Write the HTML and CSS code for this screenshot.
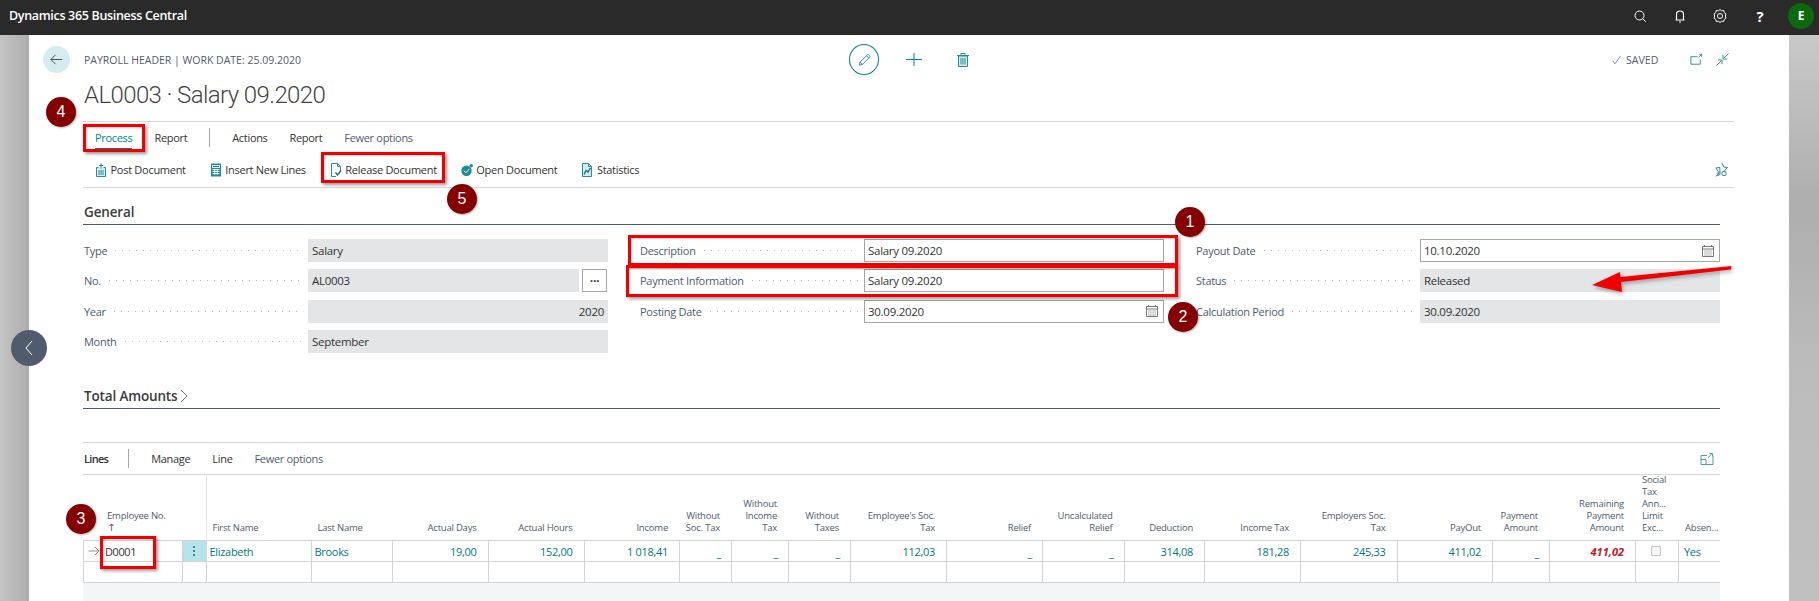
FILE: index.html
```html
<!DOCTYPE html>
<html lang="en">
<head>
<meta charset="utf-8">
<title>AL0003 · Salary 09.2020</title>
<link rel="stylesheet" href="styles.css">
</head>
<body>
<div class="screen">
  <header class="topbar">
    <div class="brand">Dynamics 365 Business Central</div>
    <div class="top-icons">
      <svg class="ti" viewBox="0 0 16 16"><circle cx="7.500" cy="7.500" r="4.500"/><path d="M10.800 10.800l3 3"/></svg>
      <svg class="ti" viewBox="0 0 16 16"><path d="M4.500 12V6.500a3.500 3.500 0 0 1 7 0V12zM3.500 12h9M7 14h2" stroke-width="1.200"/></svg>
      <svg class="ti" viewBox="0 0 16 16"><circle cx="8" cy="8" r="2.500"/><path d="M8 1.500l1.700 1.300 2.100-.2.500 2.100L14 6l-.7 2 .7 2-1.700 1.300-.5 2.100-2.100-.2L8 14.500l-1.700-1.300-2.100.2-.5-2.100L2 10l.7-2L2 6l1.700-1.300.5-2.100 2.100.2z"/></svg>
      <span class="help">?</span>
      <span class="avatar">E</span>
    </div>
  </header>
  <div class="stage">
    <div class="gutter"></div>
    <main class="page">
      <div class="head">
        <button class="back"><svg viewBox="0 0 16 16"><path d="M14 8H2M7 3L2 8l5 5"/></svg></button>
        <div class="crumb">PAYROLL HEADER | WORK DATE: 25.09.2020</div>
        <div class="center-tools">
          <span class="edit"><svg viewBox="0 0 16 16"><path d="M2.500 13.500l.8-3.300L11 2.500a1.200 1.200 0 0 1 1.800 0l.7.700a1.200 1.200 0 0 1 0 1.800L5.800 12.700zM3.300 10.200l2.500 2.500M10 3.500l2.500 2.500"/></svg></span>
          <svg class="tool plus" viewBox="0 0 16 13"><path d="M0 6.500h16M8 0v13"/></svg>
          <svg class="tool trash" viewBox="0 0 12 14"><path class="tint" d="M1.500 3h9v10.500h-9z"/><path d="M1.500 3h9v10.500h-9zM0 2.500h12M4 2.500V.5h4v2M4 5v6.500M6 5v6.500M8 5v6.500"/></svg>
        </div>
        <div class="saved"><svg viewBox="0 0 12 12"><path d="M1 7l2.500 3.500L10.500 1"/></svg>SAVED</div>
        <svg class="win" viewBox="0 0 16 16"><path d="M12 8v5H2V5h7M10 6l3.500-3.500M11 2.500h2.500V5"/></svg>
        <svg class="win last-win" viewBox="0 0 16 16"><path d="M1.500 14.500L7 9M3 8.500H7.500V13M14.500 1.500L9 7M13 7.500H8.500V3"/></svg>
      </div>
      <h1 class="title">AL0003 · Salary 09.2020</h1>

      <div class="ribbon">
        <nav class="tabs">
          <span class="tab current">Process</span>
          <span class="tab">Report</span>
          <i class="bar"></i>
          <span class="tab">Actions</span>
          <span class="tab">Report</span>
          <span class="tab muted">Fewer options</span>
        </nav>
        <div class="actions">
          <span class="act"><svg viewBox="0 0 12 14"><path class="tint" d="M1.500 4.500h9v9h-9z"/><path d="M1.500 4.500h2M8.500 4.500h2M1.500 4.500v9h9v-9M4 7v5M6 7v5M8 7v5M6 .5v5M3.800 2.500h4.400"/></svg>Post Document</span>
          <span class="act"><svg viewBox="0 0 12 14"><path class="fill" d="M1 .5h10v13H1z"/><path class="cut" d="M2.500 2.500h7v2h-7zM2.500 6.500h7M2.500 8.500h7M2.500 10.500h7M4.800 6v6M7.200 6v6"/></svg>Insert New Lines</span>
          <span class="act"><svg viewBox="0 0 12 14"><path d="M6 13.500H1.500V.5h6l3 3v4M7.500.5v3h3"/><path class="strong" d="M5.500 9.500l2 2.500 3.500-4.500"/></svg>Release Document</span>
          <span class="act"><svg viewBox="0 0 12 12"><circle class="fill" cx="5.500" cy="6.800" r="5.200"/><path class="cut" d="M3 6.800l2 2 3.300-3.800"/><circle class="fill" cx="10.200" cy="1.800" r="1.700"/></svg>Open Document</span>
          <span class="act"><svg viewBox="0 0 12 14"><path class="tint" d="M1.500 13.500V.5h6l3 3v10z"/><path d="M1.500 13.500V.5h6l3 3v10zM7.500.5v3h3"/><path class="strong" d="M3 11.500l2-4 2 1.500 2.500-4"/></svg>Statistics</span>
          <svg class="pin" viewBox="0 0 14 15"><path d="M7 1l1.800 4 3.700.5-2.700 2.800.4 2M5 12.500l-2.300 1 .5-4.200L1 6l3.800-.6zM1 14.500l4-5"/><circle cx="9" cy="11.500" r="2.200"/></svg>
        </div>
      </div>

      <section class="section">
        <h2 class="sec-title">General</h2>
        <div class="fields">
          <div class="col">
            <div class="field"><span class="lbl">Type</span><span class="leader"></span><span class="val ro">Salary</span></div>
            <div class="field"><span class="lbl">No.</span><span class="leader"></span><span class="val ro short">AL0003</span><span class="more">···</span></div>
            <div class="field"><span class="lbl">Year</span><span class="leader"></span><span class="val ro end">2020</span></div>
            <div class="field"><span class="lbl">Month</span><span class="leader"></span><span class="val ro">September</span></div>
          </div>
          <div class="col">
            <div class="field"><span class="lbl">Description</span><span class="leader"></span><span class="val edit-v">Salary 09.2020</span></div>
            <div class="field"><span class="lbl">Payment Information</span><span class="leader"></span><span class="val edit-v">Salary 09.2020</span></div>
            <div class="field"><span class="lbl">Posting Date</span><span class="leader"></span><span class="val edit-v date">30.09.2020<svg class="cal" viewBox="0 0 14 14"><path d="M1.500 2.500h11v10h-11zM1.500 5h11M3.500 1v2M10.500 1v2"/><path class="dots" d="M3.500 7h7M3.500 9h7M3.500 11h7"/></svg></span></div>
          </div>
          <div class="col">
            <div class="field"><span class="lbl">Payout Date</span><span class="leader"></span><span class="val edit-v date">10.10.2020<svg class="cal" viewBox="0 0 14 14"><path d="M1.500 2.500h11v10h-11zM1.500 5h11M3.500 1v2M10.500 1v2"/><path class="dots" d="M3.500 7h7M3.500 9h7M3.500 11h7"/></svg></span></div>
            <div class="field"><span class="lbl">Status</span><span class="leader"></span><span class="val ro">Released</span></div>
            <div class="field"><span class="lbl">Calculation Period</span><span class="leader"></span><span class="val ro">30.09.2020</span></div>
          </div>
        </div>
      </section>

      <section class="section totals">
        <h2 class="sec-title">Total Amounts<svg class="chev" viewBox="0 0 8 14"><path d="M1 1l6 6-6 6"/></svg></h2>
      </section>

      <section class="lines">
        <div class="lines-bar">
          <span class="tab strong">Lines</span>
          <i class="bar"></i>
          <span class="tab">Manage</span>
          <span class="tab">Line</span>
          <span class="tab muted">Fewer options</span>
          <svg class="expand" viewBox="0 0 14 13"><path d="M1 3.500V12.500h12V3.500M1 3.500h6M1 7.500h5v5M8 6l4-4.500M9.500 1.500H12.500V4.500"/></svg>
        </div>
        <div class="grid">
          <div class="hd left first"><span>Employee No.<br><b class="sort">↑</b></span></div>
          <div class="hd menu-h"></div>
          <div class="hd left"><span>First Name</span></div>
          <div class="hd left"><span>Last Name</span></div>
          <div class="hd"><span>Actual Days</span></div>
          <div class="hd"><span>Actual Hours</span></div>
          <div class="hd"><span>Income</span></div>
          <div class="hd"><span>Without<br>Soc. Tax</span></div>
          <div class="hd"><span>Without<br>Income<br>Tax</span></div>
          <div class="hd"><span>Without<br>Taxes</span></div>
          <div class="hd"><span>Employee's Soc.<br>Tax</span></div>
          <div class="hd"><span>Relief</span></div>
          <div class="hd"><span>Uncalculated<br>Relief</span></div>
          <div class="hd"><span>Deduction</span></div>
          <div class="hd"><span>Income Tax</span></div>
          <div class="hd"><span>Employers Soc.<br>Tax</span></div>
          <div class="hd"><span>PayOut</span></div>
          <div class="hd"><span>Payment<br>Amount</span></div>
          <div class="hd"><span>Remaining<br>Payment<br>Amount</span></div>
          <div class="hd left"><span>Social<br>Tax<br>Ann...<br>Limit<br>Exc...</span></div>
          <div class="hd left last"><span>Absen...</span></div>

          <div class="c first key"><svg class="row-arrow" viewBox="0 0 12 10"><path d="M.5 5h10.500M7 1l4 4-4 4"/></svg>D0001</div>
          <div class="c menu"><i></i><i></i><i></i></div>
          <div class="c left">Elizabeth</div>
          <div class="c left">Brooks</div>
          <div class="c">19,00</div>
          <div class="c">152,00</div>
          <div class="c">1 018,41</div>
          <div class="c dash">_</div>
          <div class="c dash">_</div>
          <div class="c dash">_</div>
          <div class="c">112,03</div>
          <div class="c dash">_</div>
          <div class="c dash">_</div>
          <div class="c">314,08</div>
          <div class="c">181,28</div>
          <div class="c">245,33</div>
          <div class="c">411,02</div>
          <div class="c dash">_</div>
          <div class="c alert">411,02</div>
          <div class="c check"><i></i></div>
          <div class="c left last">Yes</div>

          <div class="c first"></div><div class="c"></div><div class="c"></div><div class="c"></div><div class="c"></div><div class="c"></div><div class="c"></div><div class="c"></div><div class="c"></div><div class="c"></div><div class="c"></div><div class="c"></div><div class="c"></div><div class="c"></div><div class="c"></div><div class="c"></div><div class="c"></div><div class="c"></div><div class="c"></div><div class="c"></div><div class="c last"></div>
        </div>
        <div class="grid-foot"></div>
      </section>
    </main>
    <div class="gutter right"></div>
  </div>

  <button class="side-nav"><svg viewBox="0 0 12 20"><path d="M9 3L3 10l6 7"/></svg></button>

  <i class="mark m-process"></i>
  <i class="mark m-release"></i>
  <i class="mark m-desc"></i>
  <i class="mark m-pay"></i>
  <i class="mark m-emp"></i>
  <span class="num n1">1</span>
  <span class="num n2">2</span>
  <span class="num n3">3</span>
  <span class="num n4">4</span>
  <span class="num n5">5</span>
  <svg class="red-arrow" viewBox="0 0 150 40"><path d="M141.500 3 L141 6.500 L31 19 L32 29 L2 22 L30 9 L30.500 14 Z"/></svg>
</div>
</body>
</html>
```
FILE: styles.css
```css
* { box-sizing: border-box; }
html, body { margin: 0; padding: 0; }
body { font-family: "Open Sans", "Noto Sans", sans-serif; color: #262626; background: #fff; }
.screen { position: relative; width: 1819px; height: 601px; overflow: hidden; }

.topbar { height: 35px; background: #2a2a2a; display: flex; align-items: center; justify-content: space-between; padding: 0 5px 4px 9px; }
.brand { color: #fff; font-size: 12.5px; font-weight: 600; letter-spacing: -.32px; }
.top-icons { display: flex; align-items: center; gap: 24px; }
.ti { width: 16px; height: 16px; fill: none; stroke: #fff; stroke-width: 1; }
.help { width: 16px; color: #fff; font-size: 15px; font-weight: 700; text-align: center; }
.avatar { width: 26px; height: 26px; border-radius: 50%; background: #0b6a0b; color: #fff; font-size: 12px; font-weight: 700; display: flex; align-items: center; justify-content: center; margin-left: -4px; }

.stage { display: flex; height: 566px; }
.gutter { width: 29px; background: linear-gradient(90deg, #c4c4c4, #adadad); }
.gutter.right { width: 30px; background: linear-gradient(180deg, #c8c8c8, #aeaeae 30%, #bcbcbc 60%, #c0c0c0); }
.page { flex: 1; min-width: 0; background: #fff; padding-left: 54px; padding-right: 55px; }

.head { display: flex; align-items: center; height: 27px; margin-top: 11px; position: relative; }
.back { position: absolute; left: -40px; top: 0; width: 27px; height: 27px; padding: 0; border: 0; border-radius: 50%; background: #d4edf1; display: flex; align-items: center; justify-content: center; }
.back svg { width: 15px; height: 15px; fill: none; stroke: #444; stroke-width: 1; }
.crumb { width: 766px; padding-left: 1px; font-size: 10.5px; color: #505c6e; letter-spacing: 0; white-space: nowrap; }
.center-tools { display: flex; align-items: center; width: 763px; }
.edit { width: 30px; height: 31px; border: 1px solid #00838f; border-radius: 50%; display: flex; align-items: center; justify-content: center; flex: none; }
.edit svg { width: 15px; height: 16px; fill: none; stroke: #2a8c96; stroke-width: 1; }
.tool { fill: none; stroke: #00838f; stroke-width: 1; flex: none; }
.plus { width: 16px; height: 13px; margin-left: 27px; }
.trash { width: 12px; height: 14px; margin-left: 35px; stroke: #2a8c96; }
.tint { fill: #d2ecef; stroke: none; }
.saved { display: flex; align-items: center; font-size: 10.5px; color: #505c6e; letter-spacing: .05px; width: 77px; flex: none; }
.saved svg { width: 10px; height: 12px; margin-right: 4px; fill: none; stroke: #505c6e; stroke-width: .8; }
.win { width: 15px; height: 15px; fill: none; stroke: #2a8c96; stroke-width: 1; margin-right: 11px; flex: none; }
.last-win { margin-right: 0; }

.title { margin: 0; height: 48px; padding-left: 1px; font-family: Roboto, "Open Sans", sans-serif; font-size: 24px; line-height: 44px; font-weight: 300; color: #444; letter-spacing: -.6px; white-space: nowrap; }

.ribbon { height: 67px; border-top: 1px solid #d7d7d7; border-bottom: 1px solid #d7d7d7; }
.tabs { display: flex; align-items: center; height: 31px; padding-left: 12px; gap: 22px; }
.tab { letter-spacing: -.32px; color: #333; font-size: 11px; line-height: 16px; white-space: nowrap; }
.tab.current { color: #00838f; border-bottom: 1px solid #00838f; line-height: 18px; margin-top: 3px; height: 20px; }
.tab.muted { color: #505c6e; }
.tab.strong { color: #333; font-weight: 600; letter-spacing: -.7px; margin-right: -2px; }
.bar { width: 1px; height: 19px; background: #a8a8a8; display: block; }
.actions { display: flex; align-items: center; height: 33px; padding-left: 12px; gap: 24px; }
.act { display: flex; align-items: center; gap: 3.500px; font-size: 11px; letter-spacing: -.28px; color: #333; white-space: nowrap; }
.act svg { width: 12px; height: 14px; fill: none; stroke: #2a8c96; stroke-width: 1; flex: none; }
.act .fill { fill: #1f8d98; stroke: none; }
.act .cut { stroke: #fff; stroke-width: .9; fill: none; }
.act .strong { stroke: #00707a; stroke-width: 1.300; }
.pin { width: 14px; height: 15px; margin-left: auto; margin-right: 5px; fill: none; stroke: #2a8c96; stroke-width: 1; }

.section { margin-right: 14px; }
.sec-title { margin: 0; height: 37px; padding: 13px 0 2px 1px; border-bottom: 1px solid #505c6e; font-size: 13.5px; line-height: 18px; font-weight: 600; color: #3b3b3b; letter-spacing: -.15px; display: flex; align-items: center; }
.fields { display: grid; grid-template-columns: 525px 556px 1fr; padding-top: 14px; height: 156px; }
.col { display: flex; flex-direction: column; gap: 7.330px; padding-left: 1px; }
.col:nth-child(2), .col:nth-child(3) { padding-left: 32px; }
.field { display: flex; align-items: center; height: 23px; font-size: 11px; letter-spacing: -.28px; }
.lbl { color: #505c6e; white-space: nowrap; flex: none; }
.leader { flex: 1; height: 1px; margin: 0 6px 0 8px; background: repeating-linear-gradient(90deg, #b4b8be 0 1px, transparent 1px 7px); }
.val { width: 300px; height: 23px; line-height: 21px; padding: 1px 4px; color: #333; flex: none; white-space: nowrap; display: flex; align-items: center; font-size: 11.5px; }
.ro { background: #e4e5e7; }
.ro.short { width: 271px; }
.ro.end { justify-content: flex-end; }
.more { width: 25px; height: 23px; margin-left: 3px; margin-right: 1px; border: 1px solid #a6a6a6; display: flex; align-items: center; justify-content: center; color: #444; font-size: 12px; font-weight: 700; flex: none; }
.edit-v { border: 1px solid #a6a6a6; padding: 0 3px; }
.date { justify-content: space-between; }
.cal { width: 14px; height: 14px; fill: none; stroke: #6a6a6a; stroke-width: .9; margin-right: 1px; }
.cal .dots { stroke-width: 1; stroke-dasharray: 1 1; }

.totals .sec-title { height: 28px; padding: 5px 0 2px 1px; }
.chev { width: 8px; height: 14px; margin-left: 3px; fill: none; stroke: #505c6e; stroke-width: .8; }

.lines { margin: 33px 14px 0 0; }
.lines-bar { height: 33px; border-top: 1px solid #d7d7d7; border-bottom: 1px solid #d7d7d7; display: flex; align-items: center; gap: 22px; padding-left: 1px; }
.expand { width: 14px; height: 13px; margin-left: auto; margin-right: 6px; fill: none; stroke: #4f9fa8; stroke-width: 1; }

.grid { display: grid; grid-template-columns: 99.500px 24px 105px 81px 96px 96px 95.500px 52px 57px 62px 96px 96px 81.500px 80.500px 96px 96.500px 95.500px 57px 86px 43px 41px; grid-template-rows: 66px 21px 21px; width: 1637px; }
.hd { display: flex; align-items: flex-end; justify-content: flex-end; text-align: right; padding: 0 12px 6px 0; font-size: 9.5px; line-height: 12px; color: #505c6e; letter-spacing: -.22px; border-bottom: 1px solid #d0d3d8; white-space: nowrap; }
.hd.left { justify-content: flex-start; text-align: left; padding-left: 6px; padding-right: 0; }
.hd.first { padding-left: 24px; }
.sort { font-family: "DejaVu Sans", sans-serif; font-weight: 400; font-size: 10px; }
.menu-h { border-right: 1px solid #e4e6e9; padding: 0; }
.c { height: 21px; border-right: 1px solid #d0d3d8; border-bottom: 1px solid #d0d3d8; display: flex; align-items: center; justify-content: flex-end; padding-right: 11px; font-size: 11px; color: #00787d; letter-spacing: -.3px; white-space: nowrap; }
.c.left { justify-content: flex-start; padding: 0 0 0 3px; }
.c.first { border-left: 1px solid #d0d3d8; justify-content: flex-start; padding: 0; }
.c.last { border-right: 0; padding-left: 5px; }
.c.key { color: #333; letter-spacing: -.4px; }
.row-arrow { width: 12px; height: 10px; margin: 0 5px 0 4px; fill: none; stroke: #777; stroke-width: .8; flex: none; }
.c.dash { align-items: flex-end; padding-right: 10px; line-height: 17px; }
.c.alert { color: #c9151b; font-weight: 700; font-style: italic; letter-spacing: 0; }
.menu { background: #b3e5ea; flex-direction: column; justify-content: center; align-items: center; gap: 2px; padding: 0; }
.menu i { width: 2px; height: 2px; background: #5d7e86; display: block; }
.check { justify-content: center; padding: 0 2px 0 0; }
.check i { width: 10px; height: 10px; border: 1px solid #c4c4c4; border-radius: 1px; background: #f7f7f7; display: block; }
.grid-foot { height: 19px; background: #f4f5f6; width: 1637px; }

.side-nav { position: absolute; left: 11px; top: 330px; width: 36px; height: 36px; padding: 0; border: 0; border-radius: 50%; background: #505c6e; display: flex; align-items: center; justify-content: center; }
.side-nav svg { width: 12px; height: 20px; fill: none; stroke: #fff; stroke-width: 1; }

.mark { position: absolute; display: block; border: 3px solid #f20000; box-shadow: 2px 2px 3px rgba(0,0,0,.4), inset 1px 1px 2px rgba(0,0,0,.2); }
.m-process { left: 83px; top: 124px; width: 62px; height: 28px; }
.m-release { left: 321px; top: 152px; width: 124px; height: 31px; }
.m-desc { left: 628px; top: 235px; width: 550px; height: 31px; }
.m-pay { left: 626px; top: 265px; width: 552px; height: 32px; }
.m-emp { left: 100px; top: 536px; width: 56px; height: 33px; }
.num { position: absolute; width: 30px; height: 30px; border-radius: 50%; background: #850000; color: #fff; font-family: "Liberation Sans", sans-serif; font-size: 16px; line-height: 30px; text-align: center; box-shadow: 1px 1px 2px rgba(0,0,0,.3); }
.n1 { left: 1175px; top: 207px; }
.n2 { left: 1168px; top: 302px; }
.n3 { left: 66px; top: 504px; }
.n4 { left: 46px; top: 97px; }
.n5 { left: 447px; top: 184px; }
.red-arrow { position: absolute; left: 1590px; top: 263px; width: 150px; height: 40px; fill: #f20000; filter: drop-shadow(1px 2px 2px rgba(0,0,0,.35)); }
```
